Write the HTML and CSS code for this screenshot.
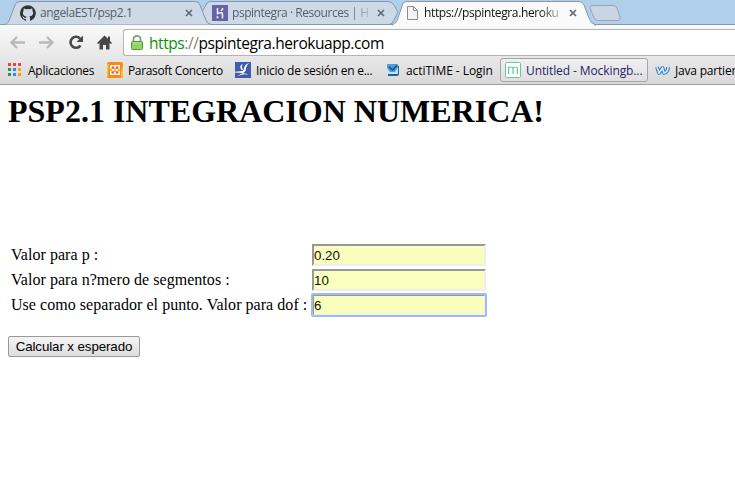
FILE: index.html
```html
<!DOCTYPE html>
<html lang="es">
<head>
<meta charset="utf-8">
<title>PSP2.1</title>
<link rel="stylesheet" href="styles.css">
</head>
<body>
<header class="browser">
  <div class="tabs">
    <div class="tab tab-github">
      <svg class="tab-shape" width="208" height="25" viewBox="0 0 208 25"><path d="M0 24.5C4 24 5 21 6 18L11 5Q12 1.500 16 1.500H191Q195 1.500 196 5L201 18Q203 24 207 24.500"/></svg>
      <svg class="icon" width="16" height="16" viewBox="0 0 16 16"><path fill="#333" d="M8 .2a8 8 0 0 0-2.500 15.600c.4.100.5-.2.500-.4v-1.500c-2.200.5-2.700-1-2.700-1-.4-.9-.9-1.200-.9-1.200-.7-.5.100-.5.100-.5.800.1 1.200.8 1.200.8.700 1.300 1.900.9 2.300.7.100-.5.300-.9.500-1.100-1.800-.2-3.600-.9-3.600-4 0-.9.300-1.600.8-2.100-.1-.2-.4-1 .1-2.100 0 0 .7-.2 2.200.8a7.500 7.500 0 0 1 4 0c1.500-1 2.200-.8 2.200-.8.400 1.100.2 1.900.1 2.100.5.600.8 1.300.8 2.100 0 3.100-1.900 3.700-3.700 3.900.3.300.6.800.6 1.500v2.300c0 .2.100.5.600.4A8 8 0 0 0 8 .2"/></svg>
      <span class="tab-title">angelaEST/psp2.1</span>
      <svg class="close" width="8" height="8" viewBox="0 0 8 8"><path d="M1 1l6 6M7 1L1 7"/></svg>
    </div>
    <div class="tab tab-heroku">
      <svg class="tab-shape" width="204" height="25" viewBox="0 0 204 25"><path d="M3 12L6 18Q8 24.500 12 24.500H190Q194 24 195 20L199 12 195 5Q193 1.500 189 1.500H13Q9 1.500 8 3Z"/></svg>
      <svg class="icon" width="16" height="16" viewBox="0 0 16 16"><path fill="#6762a6" d="M0 0h16v16H0z"/><path fill="none" stroke="#f1f0fa" stroke-width="1.500" d="M5.500 3v5.500q5-1.800 5 .5v4.500M10.500 3v1.200L9 6"/><path fill="#f1f0fa" d="M4.700 10.500L7 12.200l-2.300 1.600z"/></svg>
      <span class="tab-title">pspintegra · Resources | H</span>
      <svg class="close" width="8" height="8" viewBox="0 0 8 8"><path d="M1 1l6 6M7 1L1 7"/></svg>
    </div>
    <div class="tab tab-active">
      <svg class="tab-shape" width="204" height="26" viewBox="0 0 204 26"><path d="M0 26V24.500C4 24 5 21 6 18L10 6Q11 1.500 15 1.500H187Q191 1.500 192 5L197 18Q199 24 203 24.500V26"/></svg>
      <svg class="icon" width="12" height="14" viewBox="0 0 12 14"><path fill="#f4f4f4" stroke="#8b8b8b" d="M.5.500h6l4 4v9H.5zM6.500.500v4h4"/></svg>
      <span class="tab-title">https://pspintegra.heroku</span>
      <svg class="close" width="8" height="8" viewBox="0 0 8 8"><path d="M1 1l6 6M7 1L1 7"/></svg>
    </div>
    <svg class="new-tab" width="33" height="17" viewBox="0 0 33 17"><path fill="#c9d5e2" stroke="#94a4b9" d="M3 .500H24Q27 .500 28 3L31 12Q32 15.500 29 15.500H9Q6 15.500 5 13L1 3Q.5.500 3 .500Z"/></svg>
  </div>
  <div class="toolbar">
    <svg class="nav" width="112" height="18" viewBox="0 0 112 18">
      <g fill="none" stroke="#b9b9b9" stroke-width="2.300"><path d="M4 8.500H18M10 3L4.500 8.500l5.500 5.500"/><path d="M32 8.500H46M40 3l5.500 5.500L40 14"/></g>
      <path fill="none" stroke="#484848" stroke-width="2.600" d="M73 4.500A5.500 5.500 0 1 0 73.500 11.500"/><path fill="#484848" d="M76 1.500v6.500h-6.500z"/>
      <path fill="#484848" d="M97.500 1.500L90 9l1 1 1.500-1v6.500H96V11h3v4.500h3.500V9l1.500 1 1-1-2-2V2.500h-2v2.200z"/>
    </svg>
    <div class="address">
      <svg class="lock" width="12" height="15" viewBox="0 0 12 15"><path fill="none" stroke="#8b9588" stroke-width="1.800" d="M2.500 7V4a3.500 3.200 0 0 1 7 0v3"/><rect x=".5" y="6.500" width="11" height="8" rx="1" fill="#8bd75f" stroke="#54933c"/><path stroke="#b4ec91" d="M2 8h8"/></svg>
      <span class="url"><span class="scheme">https</span><span class="slashes">://</span>pspintegra.herokuapp.com</span>
    </div>
  </div>
  <nav class="bookmarks">
    <div class="bookmark b-apps">
      <svg class="icon" width="14" height="14" viewBox="0 0 14 14"><path fill="#e8453c" d="M0 0h3v3H0zM5 0h3v3H5zM10 0h3v3h-3z"/><path fill="#21955a" d="M0 5h3v3H0zM0 10h3v3H0z"/><path fill="#4285e8" d="M5 5h3v3H5zM5 10h3v3H5z"/><path fill="#f4a50c" d="M10 5h3v3h-3zM10 10h3v3h-3z"/></svg>
      <span class="label">Aplicaciones</span>
    </div>
    <div class="bookmark b-parasoft">
      <svg class="icon" width="16" height="16" viewBox="0 0 16 16"><rect width="16" height="16" rx="2" fill="#f88b13"/><path fill="#fbc22f" d="M0 2h2L1 14H0zM14 10l2-7v11l-2 2z"/><path fill="#fff0df" d="M3 3h10v10H3z"/><path fill="#ee5a24" d="M5 4.500h2v2.200H4.500v-1zM9 4.500h2l.5 1v1.200H9zM4.500 9.300H7v2.200H5l-.5-1zM9 9.300h2.500v1.200l-.5 1H9zM7.500 6h1v4h-1zM3 7.500h2v1H3zM11 7.500h2v1h-2z"/></svg>
      <span class="label">Parasoft Concerto</span>
    </div>
    <div class="bookmark b-session">
      <svg class="icon" width="16" height="16" viewBox="0 0 16 16"><path fill="#405cae" d="M0 0h16v16H0z"/><path fill="#fff" d="M14.500 1Q11 3 10.500 9L8 11 0 10.500V9.700L7.500 9Q9 8 9 6 10 2 14.500 1zM7.500 2Q4 4 6 7.500L8 8Q6 5 7.500 2zM8 11l6 1.500-5-.2L2 14z"/></svg>
      <span class="label">Inicio de sesión en e...</span>
    </div>
    <div class="bookmark b-actitime">
      <svg class="icon" width="14" height="14" viewBox="0 0 14 14"><path fill="#255d9b" d="M2 2l11 1v9l-2 1H2z"/><rect x="1" y="1" width="11" height="10" rx="1" fill="#4d9bdc"/><path fill="#bfe2f7" d="M1 5l3 4h5l3-5v7H1z"/><path fill="none" stroke="#174b80" stroke-width="1.500" d="M3 4l3.500 3L11 2.500"/></svg>
      <span class="label">actiTIME - Login</span>
    </div>
    <div class="bookmark b-mocking">
      <svg class="icon" width="16" height="16" viewBox="0 0 16 16"><rect x=".5" y=".5" width="15" height="15" rx="1" fill="#fff" stroke="#68c894"/><path fill="none" stroke="#68c894" stroke-width="1.200" d="M3.600 12V5M3.600 7q0-2 2.200-2T8 7v5M8 7q0-2 2.200-2t2.200 2v5"/></svg>
      <span class="label">Untitled - Mockingb...</span>
    </div>
    <div class="bookmark b-java">
      <svg class="icon" width="15" height="12" viewBox="0 0 15 12"><path fill="none" stroke="#2b7dcb" stroke-width="3.800" stroke-linejoin="round" d="M2 3l2 6 3.500-5L9 9q4-1 4-6"/><path fill="none" stroke="#dcefff" stroke-width="1.600" d="M2 3l2 6 3.500-5L9 9q4-1 4-6"/></svg>
      <span class="label">Java partien</span>
    </div>
  </nav>
</header>
<main class="page">
  <h1>PSP2.1 INTEGRACION NUMERICA!</h1>
  <form>
    <div class="fields">
      <label for="p">Valor para p :</label><input id="p" type="text" value="0.20">
      <label for="n">Valor para n?mero de segmentos :</label><input id="n" type="text" value="10">
      <label for="dof">Use como separador el punto. Valor para dof :</label><input id="dof" class="focused" type="text" value="6">
    </div>
    <button type="button">Calcular x esperado</button>
  </form>
</main>
</body>
</html>
```

FILE: styles.css
```css
* { box-sizing: border-box; }
body { margin: 0; height: 486px; overflow: hidden; background: #fff; color: #000; font-family: "Liberation Serif", serif; }
svg { display: block; flex: none; }
.browser { height: 85px; font-family: "Open Sans", sans-serif; background: linear-gradient(#f9f9f9 25px, #d9d9d9 84px); border-bottom: 1px solid #a0a0a0; overflow: hidden; }
.tabs { position: relative; display: flex; height: 25px; padding-left: 4px; background: #b0cfeb; border-bottom: 1px solid #8999ad; }
.tab { position: relative; display: flex; align-items: center; height: 25px; flex: none; color: #57606a; font-size: 12px; }
.tab-shape { position: absolute; left: 0; top: 0; fill: #cdd9e6; stroke: #8797ad; }
.tab > .icon, .tab > .tab-title, .tab > .close { position: relative; }
.tab-github { width: 195px; padding-left: 16px; z-index: 2; }
.tab-heroku { width: 193px; padding-left: 13px; }
.tab-active { width: 197px; padding-left: 15px; z-index: 3; color: #111; }
.tab-active .tab-shape { fill: #fafafa; }
.tab-title { margin-left: 4px; white-space: nowrap; flex: none; line-height: 18px; overflow: hidden; }
.tab-github .tab-title { width: 145px; letter-spacing: -.38px; }
.tab-heroku .tab-title { width: 145px; letter-spacing: -.46px; -webkit-mask-image: linear-gradient(90deg, #000 116px, transparent 142px); mask-image: linear-gradient(90deg, #000 116px, transparent 142px); }
.tab-active .tab-title { margin-left: 5px; width: 145px; letter-spacing: -.37px; -webkit-mask-image: linear-gradient(90deg, #000 116px, transparent 142px); mask-image: linear-gradient(90deg, #000 116px, transparent 142px); }
.close { fill: none; stroke: #636971; stroke-width: 1.7; }
.new-tab { margin-top: 5px; }
.toolbar { display: flex; align-items: center; height: 31px; padding-top: 4px; padding-left: 7px; }
.nav { margin-right: 4px; }
.address { display: flex; align-items: center; flex: 1; height: 27px; padding-left: 7px; border: 1px solid #b4b4b4; border-right: 0; border-radius: 3px 0 0 3px; background: #fff; }
.url { margin-left: 6px; font-size: 15.5px; letter-spacing: -.43px; white-space: nowrap; }
.scheme { color: #079207; }
.slashes { color: #808080; }
.bookmarks { display: flex; align-items: center; height: 28px; padding-left: 8px; font-size: 12px; }
.bookmark { display: flex; align-items: center; flex: none; height: 24px; white-space: nowrap; letter-spacing: -.25px; }
.label { margin-left: 6px; }
.b-apps { width: 99px; }
.b-parasoft { width: 128px; letter-spacing: -.35px; }
.b-parasoft .label, .b-session .label { margin-left: 5px; }
.b-session { width: 151px; }
.b-actitime { width: 114px; letter-spacing: 0; letter-spacing: -.05px; }
.b-mocking { width: 148px; padding-left: 4px; border: 1px solid #a5a5a5; border-radius: 3px; background: linear-gradient(#f0f0f0, #dfdfdf); color: #25246f; letter-spacing: -.1px; }
.b-mocking .label { margin-left: 5px; }
.b-java { margin-left: 7px; letter-spacing: -.2px; }
.b-java .label { margin-left: 5px; }
.page { padding: 8px; }
h1 { margin: 0 0 113px; font-size: 32px; line-height: 37px; font-weight: bold; white-space: nowrap; }
.fields { display: grid; grid-template-columns: 299px 174px; column-gap: 2px; row-gap: 3px; align-items: center; padding: 1px 3px; font-size: 16px; }
label { line-height: 20px; white-space: nowrap; letter-spacing: .045px; }
input { width: 174px; height: 22px; margin: 0; padding: 0; border: 2px solid; border-color: #999 #eee #eee #999; background: #faffbd; font: 13.333px "Liberation Sans", sans-serif; color: #111; }
.focused { outline: 2px solid #9cbcf4; outline-offset: -1px; border-radius: 1px; }
button { display: block; width: 132px; height: 21px; margin-top: 19px; padding: 0; border: 1px solid #999; border-radius: 2px; background: linear-gradient(#f5f5f5, #dddddd); font: 13.333px "Liberation Sans", sans-serif; letter-spacing: -.1px; color: #000; white-space: nowrap; }
```
